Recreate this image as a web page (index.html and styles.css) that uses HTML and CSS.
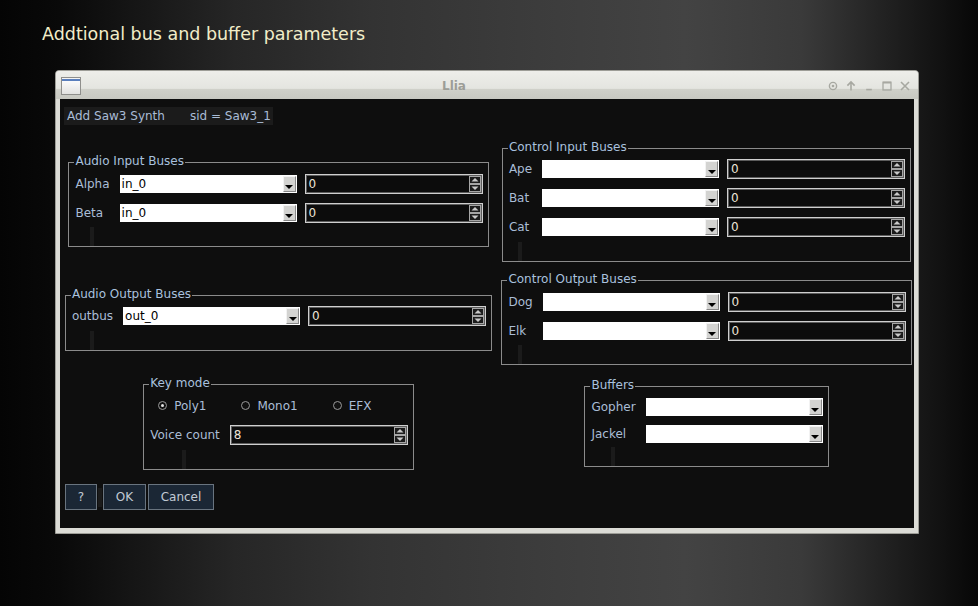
FILE: index.html
```html
<!DOCTYPE html>
<html>
<head>
<meta charset="utf-8">
<title>Llia</title>
<link rel="stylesheet" href="styles.css">
</head>
<body>
<h1 class="page-title">Addtional bus and buffer parameters</h1>
<div class="window">
  <div class="titlebar">
    <span class="app-icon"></span>
    <span class="win-title">Llia</span>
    <span class="win-controls">
      <svg width="12" height="12" viewBox="0 0 12 12"><circle cx="6" cy="6" r="3.6" fill="none" stroke="#a7a8a1" stroke-width="1.4"/><circle cx="6" cy="6" r="1.3" fill="#a7a8a1"/></svg>
      <svg width="12" height="12" viewBox="0 0 12 12"><path d="M6 10.5V2.2M2.4 5.6L6 2l3.6 3.6" fill="none" stroke="#a7a8a1" stroke-width="1.6"/></svg>
      <svg width="12" height="12" viewBox="0 0 12 12"><path d="M3.2 9.6h5.6" fill="none" stroke="#a7a8a1" stroke-width="1.6"/></svg>
      <svg width="12" height="12" viewBox="0 0 12 12"><rect x="2" y="2.2" width="8" height="7.8" fill="none" stroke="#a7a8a1" stroke-width="1.3"/><path d="M2 2.6h8" stroke="#a7a8a1" stroke-width="1.8"/></svg>
      <svg width="12" height="12" viewBox="0 0 12 12"><path d="M2 2l8 8M10 2l-8 8" fill="none" stroke="#a7a8a1" stroke-width="1.6"/></svg>
    </span>
  </div>
  <div class="client">
    <div class="synth-header"><span>Add Saw3 Synth</span><span>sid = Saw3_1</span></div>

    <div class="panels">
      <section class="group">
        <div class="group-title">Audio Input Buses</div>
        <div class="group-grid rows-2">
          <span class="lbl">Alpha</span>
          <div class="combo"><span class="combo-text">in_0</span><span class="combo-btn"></span></div>
          <div class="spin"><span class="spin-text">0</span><svg class="spin-btns" width="12" height="16" viewBox="0 0 12 16"><rect x="0.5" y="0.5" width="11" height="7" fill="#1c1c1c" stroke="#a6a6a6"/><rect x="0.5" y="8.5" width="11" height="7" fill="#1c1c1c" stroke="#a6a6a6"/><path d="M2.5 5.5h7L6 2z" fill="#c9c9c9"/><path d="M2.5 10.5h7L6 14z" fill="#c9c9c9"/></svg></div>
          <span class="lbl">Beta</span>
          <div class="combo"><span class="combo-text">in_0</span><span class="combo-btn"></span></div>
          <div class="spin"><span class="spin-text">0</span><svg class="spin-btns" width="12" height="16" viewBox="0 0 12 16"><rect x="0.5" y="0.5" width="11" height="7" fill="#1c1c1c" stroke="#a6a6a6"/><rect x="0.5" y="8.5" width="11" height="7" fill="#1c1c1c" stroke="#a6a6a6"/><path d="M2.5 5.5h7L6 2z" fill="#c9c9c9"/><path d="M2.5 10.5h7L6 14z" fill="#c9c9c9"/></svg></div>
          <span class="filler"></span>
        </div>
      </section>

      <section class="group">
        <div class="group-title">Control Input Buses</div>
        <div class="group-grid rows-3">
          <span class="lbl">Ape</span>
          <div class="combo"><span class="combo-text"></span><span class="combo-btn"></span></div>
          <div class="spin"><span class="spin-text">0</span><svg class="spin-btns" width="12" height="16" viewBox="0 0 12 16"><rect x="0.5" y="0.5" width="11" height="7" fill="#1c1c1c" stroke="#a6a6a6"/><rect x="0.5" y="8.5" width="11" height="7" fill="#1c1c1c" stroke="#a6a6a6"/><path d="M2.5 5.5h7L6 2z" fill="#c9c9c9"/><path d="M2.5 10.5h7L6 14z" fill="#c9c9c9"/></svg></div>
          <span class="lbl">Bat</span>
          <div class="combo"><span class="combo-text"></span><span class="combo-btn"></span></div>
          <div class="spin"><span class="spin-text">0</span><svg class="spin-btns" width="12" height="16" viewBox="0 0 12 16"><rect x="0.5" y="0.5" width="11" height="7" fill="#1c1c1c" stroke="#a6a6a6"/><rect x="0.5" y="8.5" width="11" height="7" fill="#1c1c1c" stroke="#a6a6a6"/><path d="M2.5 5.5h7L6 2z" fill="#c9c9c9"/><path d="M2.5 10.5h7L6 14z" fill="#c9c9c9"/></svg></div>
          <span class="lbl">Cat</span>
          <div class="combo"><span class="combo-text"></span><span class="combo-btn"></span></div>
          <div class="spin"><span class="spin-text">0</span><svg class="spin-btns" width="12" height="16" viewBox="0 0 12 16"><rect x="0.5" y="0.5" width="11" height="7" fill="#1c1c1c" stroke="#a6a6a6"/><rect x="0.5" y="8.5" width="11" height="7" fill="#1c1c1c" stroke="#a6a6a6"/><path d="M2.5 5.5h7L6 2z" fill="#c9c9c9"/><path d="M2.5 10.5h7L6 14z" fill="#c9c9c9"/></svg></div>
          <span class="filler"></span>
        </div>
      </section>

      <section class="group">
        <div class="group-title">Audio Output Buses</div>
        <div class="group-grid rows-1">
          <span class="lbl">outbus</span>
          <div class="combo"><span class="combo-text">out_0</span><span class="combo-btn"></span></div>
          <div class="spin"><span class="spin-text">0</span><svg class="spin-btns" width="12" height="16" viewBox="0 0 12 16"><rect x="0.5" y="0.5" width="11" height="7" fill="#1c1c1c" stroke="#a6a6a6"/><rect x="0.5" y="8.5" width="11" height="7" fill="#1c1c1c" stroke="#a6a6a6"/><path d="M2.5 5.5h7L6 2z" fill="#c9c9c9"/><path d="M2.5 10.5h7L6 14z" fill="#c9c9c9"/></svg></div>
          <span class="filler"></span>
        </div>
      </section>

      <section class="group">
        <div class="group-title">Control Output Buses</div>
        <div class="group-grid rows-2">
          <span class="lbl">Dog</span>
          <div class="combo"><span class="combo-text"></span><span class="combo-btn"></span></div>
          <div class="spin"><span class="spin-text">0</span><svg class="spin-btns" width="12" height="16" viewBox="0 0 12 16"><rect x="0.5" y="0.5" width="11" height="7" fill="#1c1c1c" stroke="#a6a6a6"/><rect x="0.5" y="8.5" width="11" height="7" fill="#1c1c1c" stroke="#a6a6a6"/><path d="M2.5 5.5h7L6 2z" fill="#c9c9c9"/><path d="M2.5 10.5h7L6 14z" fill="#c9c9c9"/></svg></div>
          <span class="lbl">Elk</span>
          <div class="combo"><span class="combo-text"></span><span class="combo-btn"></span></div>
          <div class="spin"><span class="spin-text">0</span><svg class="spin-btns" width="12" height="16" viewBox="0 0 12 16"><rect x="0.5" y="0.5" width="11" height="7" fill="#1c1c1c" stroke="#a6a6a6"/><rect x="0.5" y="8.5" width="11" height="7" fill="#1c1c1c" stroke="#a6a6a6"/><path d="M2.5 5.5h7L6 2z" fill="#c9c9c9"/><path d="M2.5 10.5h7L6 14z" fill="#c9c9c9"/></svg></div>
          <span class="filler"></span>
        </div>
      </section>

      <section class="group">
        <div class="group-title">Key mode</div>
        <div class="group-grid rows-2k two-col">
          <div class="radio-row">
            <span class="radio"><span class="radio-mark checked"></span>Poly1</span>
            <span class="radio"><span class="radio-mark"></span>Mono1</span>
            <span class="radio"><span class="radio-mark"></span>EFX</span>
          </div>
          <span class="lbl">Voice count</span>
          <div class="spin spin-tight"><span class="spin-text">8</span><svg class="spin-btns" width="12" height="16" viewBox="0 0 12 16"><rect x="0.5" y="0.5" width="11" height="7" fill="#1c1c1c" stroke="#a6a6a6"/><rect x="0.5" y="8.5" width="11" height="7" fill="#1c1c1c" stroke="#a6a6a6"/><path d="M2.5 5.5h7L6 2z" fill="#c9c9c9"/><path d="M2.5 10.5h7L6 14z" fill="#c9c9c9"/></svg></div>
          <span class="filler"></span>
        </div>
      </section>

      <section class="group">
        <div class="group-title">Buffers</div>
        <div class="group-grid rows-2s two-col">
          <span class="lbl">Gopher</span>
          <div class="combo"><span class="combo-text"></span><span class="combo-btn"></span></div>
          <span class="lbl">Jackel</span>
          <div class="combo"><span class="combo-text"></span><span class="combo-btn"></span></div>
          <span class="filler"></span>
        </div>
      </section>
    </div>

    <div class="actions">
      <button class="btn btn-help">?</button>
      <span class="btn-sep"></span>
      <button class="btn btn-ok">OK</button>
      <button class="btn btn-cancel">Cancel</button>
    </div>
  </div>
</div>
</body>
</html>
```

FILE: styles.css
```css
html, body {
  margin: 0;
  padding: 0;
}

body {
  width: 978px;
  height: 606px;
  overflow: hidden;
  font-family: "DejaVu Sans", "Noto Sans", sans-serif;
  font-size: 12px;
  background:
    linear-gradient(90deg, #040404 0%, #090909 6%, #161616 14%, #262626 24%, #333333 38%, #3c3c3c 55%, #434343 70%, #3a3a3a 82%, #1d1d1d 92%, #070707 100%);
}

.page-title {
  margin: 24px 0 26px 42px;
  font-size: 17.5px;
  line-height: 20px;
  font-weight: normal;
  color: #f1edc9;
}

/* ---------- window ---------- */
.window {
  margin-left: 55px;
  width: 862px;
  border: 1px solid #9d9d97;
  border-radius: 4px 4px 0 0;
  background: #dcdcd6;
}

.titlebar {
  height: 28px;
  display: flex;
  align-items: center;
  padding: 0 7px 0 5px;
  border-radius: 3px 3px 0 0;
  background: linear-gradient(#eeeeea 0%, #e4e5e0 62%, #cfd0c9 66%, #c7c8c1 100%);
}

.app-icon {
  width: 20px;
  height: 18px;
  margin-top: 1px;
  box-sizing: border-box;
  border: 1px solid #8f8f8c;
  background: linear-gradient(#f4f4f4 0, #f4f4f4 1px, #5a7fbd 1px, #5a7fbd 3px, #fbfbfb 3px, #e2e2e0 100%);
}

.win-title {
  flex: 1;
  text-align: center;
  font-weight: bold;
  font-size: 12px;
  color: #9c9d97;
  padding-top: 2px;
}

.win-controls {
  display: flex;
  gap: 6px;
  padding-top: 1px;
}

.win-controls svg {
  display: block;
}

.client {
  margin: 0 4px 5px 4px;
  height: 429px;
  background: #0e0e0e;
  overflow: hidden;
}

.synth-header {
  display: flex;
  gap: 25px;
  width: fit-content;
  margin: 8px 0 0 4px;
  height: 18px;
  line-height: 18px;
  padding: 0 2px 0 3px;
  background: #1b1b1b;
  color: #a9bcd6;
}

/* ---------- panels ---------- */
.panels {
  display: grid;
  grid-template-columns: 437px 419px;
  grid-template-rows: 131px 103px 103px;
  row-gap: 1px;
  margin-top: 10px;
  align-items: center;
  justify-items: center;
}

.group {
  margin-top: 8px;
  border: 1px solid #8b8b8b;
  padding: 0 5px;
}

.group-title {
  width: fit-content;
  margin: -9px 0 1px;
  padding: 0 1px;
  line-height: 14px;
  background: #0e0e0e;
  color: #a9c1de;
}

.group-grid {
  display: grid;
  grid-template-columns: auto auto auto;
  align-items: center;
}

.group-grid.two-col {
  grid-template-columns: auto auto;
}

.rows-1 { grid-template-rows: 29px 19px; }
.rows-2 { grid-template-rows: 29px 29px 19px; }
.rows-2k { grid-template-rows: 30px 29px 19px; }
.rows-3 { grid-template-rows: 29px 29px 29px 19px; }
.rows-2s { grid-template-rows: 27px 27px 19px; }

.lbl {
  padding: 0 10px 0 1px;
  color: #aabdd6;
  white-space: nowrap;
}

.filler {
  grid-column: 1;
  width: 4px;
  height: 19px;
  background: #1b1b1b;
  justify-self: center;
  align-self: end;
  margin-right: 10px;
}

/* combobox */
.combo {
  width: 177px;
  height: 18px;
  box-sizing: border-box;
  background: #ffffff;
  display: flex;
  justify-content: space-between;
}

.combo-text {
  padding-left: 2px;
  line-height: 18px;
  color: #000;
}

.combo-btn {
  width: 13px;
  margin: 1px 1px 1px 0;
  box-sizing: border-box;
  background: #d3d3d1;
  border: 1px solid;
  border-color: #f2f2f2 #888888 #888888 #f2f2f2;
  display: flex;
  justify-content: center;
  align-items: flex-end;
  padding-bottom: 2px;
}

.combo-btn::after {
  content: "";
  border-left: 4px solid transparent;
  border-right: 4px solid transparent;
  border-top: 4px solid #000;
}

/* spinbox */
.spin {
  width: 178px;
  height: 20px;
  margin-left: 8px;
  box-sizing: border-box;
  border: 1px solid #cfcfcf;
  box-shadow: inset 0 0 0 1px #5c5c5c;
  background: #0c0c0c;
  display: flex;
  justify-content: space-between;
  align-items: center;
  padding: 0 1px 0 3px;
}

.spin-tight {
  margin-left: 0;
}

.spin-text {
  color: #ece4d8;
  line-height: 16px;
}

.spin-btns {
  display: block;
}

/* radios */
.radio-row {
  grid-column: 1 / -1;
  display: flex;
  gap: 35px;
  padding-left: 9px;
}

.radio {
  display: flex;
  align-items: center;
  gap: 7px;
  color: #aabdd6;
}

.radio-mark {
  width: 9px;
  height: 9px;
  box-sizing: border-box;
  border-radius: 50%;
  border: 1px solid #9a9a9a;
  background: #111;
  display: flex;
  align-items: center;
  justify-content: center;
}

.radio-mark.checked::after {
  content: "";
  width: 3px;
  height: 3px;
  border-radius: 50%;
  background: #e4e4e4;
}

/* ---------- buttons ---------- */
.actions {
  display: flex;
  align-items: flex-start;
  margin: 10px 0 0 5px;
}

.btn {
  height: 26px;
  box-sizing: border-box;
  border: 1px solid #69747f;
  background: #1b2735;
  color: #c2cad4;
  font-family: "DejaVu Sans", "Noto Sans", sans-serif;
  font-size: 12px;
  padding: 0;
}

.btn-help { width: 32px; }
.btn-ok { width: 43px; }
.btn-cancel { width: 66px; margin-left: 2px; }

.btn-sep {
  width: 4px;
  height: 19px;
  margin: 4px 1px 0;
  background: #1b1b1b;
}
```
